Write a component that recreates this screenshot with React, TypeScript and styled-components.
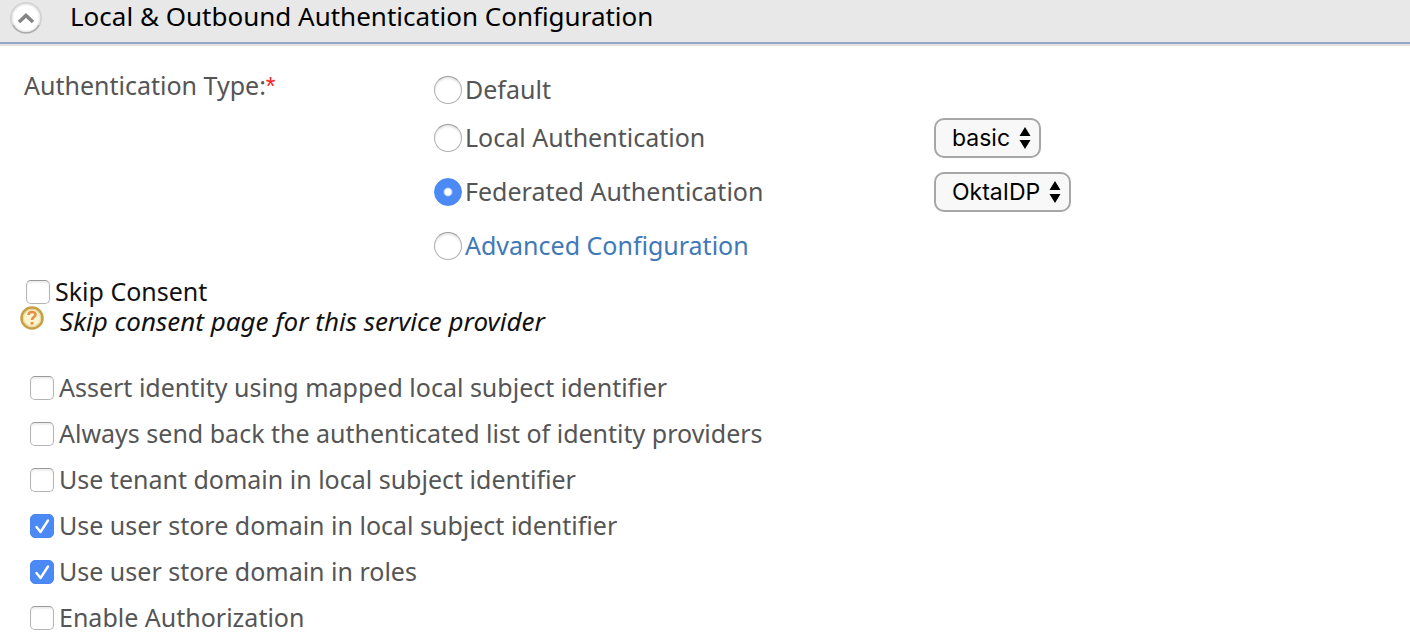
import React, { useState } from 'react';
import styled, { createGlobalStyle } from 'styled-components';

const GlobalStyle = createGlobalStyle`
  * { box-sizing: border-box; }
  body {
    margin: 0;
    background: #fff;
    color: #555;
    font: 25px/28px 'Lucida Grande', 'Noto Sans', sans-serif;
  }
`;

const Header = styled.h2`
  display: flex;
  align-items: flex-start;
  height: 46px;
  margin: 0;
  border-bottom: 2px solid #e3e3e3;
  background: #e8e8e8;
  box-shadow: inset 0 -2px 0 #94a6c8;
  color: #000;
  font-size: 26px;
  font-weight: 400;
  line-height: 32px;
`;

const Toggle = styled.button`
  display: flex;
  align-items: flex-start;
  gap: 28px;
  width: 100%;
  padding: 0 10px;
  border: 0;
  background: none;
  color: inherit;
  font: inherit;
  text-align: left;
  cursor: pointer;

  svg { flex: none; margin-top: 2px; }
`;

const TypeSection = styled.section`
  display: grid;
  grid-template-columns: 410px 1fr;
  padding: 23px 24px 0;
`;

const FieldName = styled.div`
  padding-top: 2px;
`;

const Required = styled.span`
  color: #f22;
  font-family: 'Liberation Sans', sans-serif;
`;

const Choice = styled.div<{ $compact?: boolean }>`
  display: grid;
  grid-template-columns: 500px 1fr;
  align-items: center;
  height: ${(p) => (p.$compact ? 42 : 54)}px;
`;

const RadioLabel = styled.label`
  display: flex;
  align-items: flex-start;
  gap: 3px;
  line-height: 26px;
`;

const Radio = styled.input.attrs({ type: 'radio' })`
  appearance: none;
  flex: none;
  width: 28px;
  height: 28px;
  margin: 0;
  border: 1px solid #b0b0b0;
  border-top-color: #999;
  border-radius: 50%;
  background: #fff;
  box-shadow: inset 0 2px 2px #e8e8e8;

  &:checked {
    border-color: #4a87f3;
    background: radial-gradient(circle, #fff 3px, #4b89f5 5px);
    box-shadow: none;
  }
`;

const Link = styled.a`
  color: #4078b8;
  text-decoration: none;
`;

const SelectBox = styled.div`
  display: grid;
  justify-self: start;
  align-items: center;

  > * { grid-area: 1 / 1; }
  > svg { justify-self: end; margin-right: 10px; pointer-events: none; }
`;

const Select = styled.select`
  appearance: none;
  height: 40px;
  padding: 0 28px 0 16px;
  border: 2px solid #a6a6a6;
  border-radius: 10px;
  background: #f8f8f8;
  color: #000;
  font: 23px/30px Inter, sans-serif;
`;

const Consent = styled.section`
  padding: 4px 20px 0;
  color: #111;
`;

const ConsentRow = styled.div`
  padding-left: 6px;
`;

const Help = styled.p`
  display: flex;
  align-items: flex-start;
  gap: 16px;
  margin: 1px 0 0;
  font-size: 26px;
  font-style: italic;
  line-height: 30px;
`;

const Options = styled.section`
  display: flex;
  flex-direction: column;
  gap: 18px;
  padding: 37px 30px 0;
`;

const CheckLabel = styled.label`
  display: flex;
  align-items: flex-start;
  gap: 5px;
`;

const CheckBox = styled.span`
  display: grid;
  flex: none;
  margin-top: 3px;

  > * { grid-area: 1 / 1; }
  > svg { pointer-events: none; }
`;

const CheckInput = styled.input.attrs({ type: 'checkbox' })`
  appearance: none;
  width: 24px;
  height: 24px;
  margin: 0;
  border: 1px solid #b4b4b4;
  border-top-color: #999;
  border-radius: 5px;
  background: #fff;
  box-shadow: inset 0 2px 2px #eee;

  &:checked {
    border-color: #4a87f3;
    background: #4b89f5;
    box-shadow: none;
  }
  & + svg { visibility: hidden; }
  &:checked + svg { visibility: visible; }
`;

function CollapseIcon() {
  return (
    <svg width="32" height="32" viewBox="0 0 32 32" aria-hidden="true">
      <circle cx="16" cy="16" r="15" fill="#fff" stroke="#d2d2d2" strokeWidth="2" />
      <circle cx="16" cy="16" r="13.500" fill="none" stroke="#ececec" strokeWidth="1.500" />
      <path d="M3 23a14.700 14.700 0 0 0 26 0" fill="none" stroke="#aaa" strokeWidth="1.500" />
      <path d="M9 20l7-6.500 7 6.500" fill="none" stroke="#858585" strokeWidth="3.600" />
    </svg>
  );
}

function HelpIcon() {
  return (
    <svg width="24" height="24" viewBox="0 0 24 24" aria-hidden="true">
      <circle cx="12" cy="12" r="10.500" fill="#fcf3cf" stroke="#c5a044" strokeWidth="2.500" />
      <circle cx="12" cy="12" r="8.500" fill="none" stroke="#e8d49a" strokeWidth="1" />
      <path d="M8.500 9c0-4 7-4 7-.5 0 2.500-3.500 2.500-3.500 5.500" fill="none" stroke="#e5904a" strokeWidth="2.600" />
      <rect x="10.600" y="16" width="2.800" height="2.600" fill="#e5904a" />
    </svg>
  );
}

function Arrows() {
  return (
    <svg width="12" height="24" viewBox="0 0 12 24" aria-hidden="true">
      <path d="M6 1l5.500 9H.5zM6 23l5.500-9H.5z" fill="#000" />
    </svg>
  );
}

function Check({ label, checked = false }: { label: string; checked?: boolean }) {
  const [on, setOn] = useState(checked);
  return (
    <CheckLabel>
      <CheckBox>
        <CheckInput checked={on} onChange={(e) => setOn(e.target.checked)} />
        <svg width="24" height="24" viewBox="0 0 24 24" aria-hidden="true">
          <path d="M6.500 13l4 5L18 6.500" fill="none" stroke="#fff" strokeWidth="2.400" strokeLinecap="round" strokeLinejoin="round" />
        </svg>
      </CheckBox>
      {label}
    </CheckLabel>
  );
}

function Dropdown({ label, value }: { label: string; value: string }) {
  return (
    <SelectBox>
      <Select aria-label={label} defaultValue={value}>
        <option>{value}</option>
      </Select>
      <Arrows />
    </SelectBox>
  );
}

const OPTIONS = [
  { label: 'Assert identity using mapped local subject identifier' },
  { label: 'Always send back the authenticated list of identity providers' },
  { label: 'Use tenant domain in local subject identifier' },
  { label: 'Use user store domain in local subject identifier', checked: true },
  { label: 'Use user store domain in roles', checked: true },
  { label: 'Enable Authorization' },
];

export default function App() {
  return (
    <>
      <GlobalStyle />
      <Header>
        <Toggle type="button" aria-expanded="true">
          <CollapseIcon />
          Local &amp; Outbound Authentication Configuration
        </Toggle>
      </Header>
      <main>
        <TypeSection>
          <FieldName id="auth-type">
            Authentication Type:<Required>*</Required>
          </FieldName>
          <div role="radiogroup" aria-labelledby="auth-type">
            <Choice $compact>
              <RadioLabel><Radio name="type" />Default</RadioLabel>
            </Choice>
            <Choice>
              <RadioLabel><Radio name="type" />Local Authentication</RadioLabel>
              <Dropdown label="Local authenticator" value="basic" />
            </Choice>
            <Choice>
              <RadioLabel><Radio name="type" defaultChecked />Federated Authentication</RadioLabel>
              <Dropdown label="Identity provider" value="OktaIDP" />
            </Choice>
            <Choice>
              <RadioLabel><Radio name="type" /><Link href="#advanced">Advanced Configuration</Link></RadioLabel>
            </Choice>
          </div>
        </TypeSection>
        <Consent>
          <ConsentRow><Check label="Skip Consent" /></ConsentRow>
          <Help><HelpIcon />Skip consent page for this service provider</Help>
        </Consent>
        <Options>
          {OPTIONS.map((o) => <Check key={o.label} {...o} />)}
        </Options>
      </main>
    </>
  );
}
